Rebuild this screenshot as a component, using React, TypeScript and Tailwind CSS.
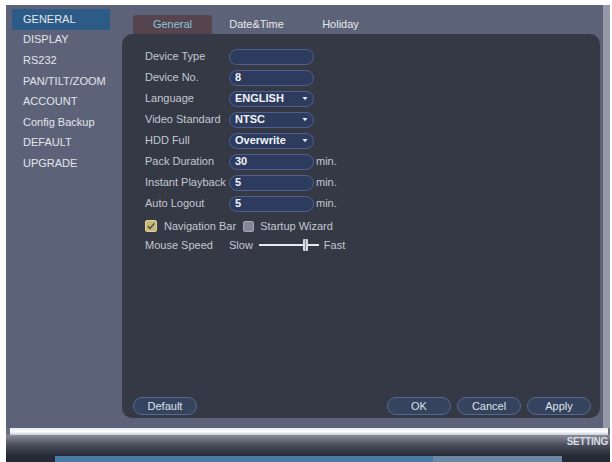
import React from "react";

const font = { fontFamily: '"Liberation Sans", Arial, sans-serif' };

const sideItems = [
  "GENERAL",
  "DISPLAY",
  "RS232",
  "PAN/TILT/ZOOM",
  "ACCOUNT",
  "Config Backup",
  "DEFAULT",
  "UPGRADE",
];

function Caret() {
  return (
    <svg width="6" height="5" viewBox="0 0 6 5" className="shrink-0">
      <path d="M0.5 1 L5.5 1 L3 4.2 Z" fill="#e8ebf2" />
    </svg>
  );
}

function Field({ value, select, unit }: { value?: string; select?: boolean; unit?: boolean }) {
  return (
    <div className="flex items-center">
      <div className="flex h-[16px] w-[85px] items-center justify-between rounded-full border border-[#50608a] bg-[#2d3b5e] pl-[5px] pr-[5px]">
        <span className="text-[11px] font-bold leading-none text-[#f2f4f8]">{value}</span>
        {select ? <Caret /> : null}
      </div>
      {unit ? <span className="ml-[2px] text-[11px] leading-none text-[#c3c7d1]">min.</span> : null}
    </div>
  );
}

function Row({ label, children, h = "h-[21px]" }: { label: string; children: React.ReactNode; h?: string }) {
  return (
    <div className={`flex items-center ${h}`}>
      <div className="w-[84px] text-[11px] leading-none text-[#c3c7d1]">{label}</div>
      {children}
    </div>
  );
}

function Btn({ label }: { label: string }) {
  return (
    <div className="flex h-[18px] w-[64px] items-center justify-center rounded-full border border-[#56688e] bg-[#35435f] text-[11px] leading-none text-[#dde1e8]">
      {label}
    </div>
  );
}

export default function App() {
  return (
    <div style={font} className="flex h-[462px] w-[612px] flex-col overflow-hidden bg-white pl-[6px] pt-[5px]">
      {/* main area */}
      <div className="flex h-[423px]">
        <div className="flex w-[597px] bg-[#5c6378]">
          {/* sidebar */}
          <div className="flex w-[116px] flex-col pl-[6px] pt-[4px]">
            {sideItems.map((s, i) => (
              <div
                key={s}
                className={`flex h-[20.6px] w-[98px] items-center pl-[11px] text-[11px] leading-none ${
                  i === 0 ? "bg-[#2b5b86] text-[#e4e8ef]" : "text-[#e2e5ec]"
                }`}
              >
                {s}
              </div>
            ))}
          </div>
          {/* right column */}
          <div className="flex w-[478px] flex-col pt-[10px]">
            <div className="flex h-[19px] gap-[5px] pl-[11px]">
              <div className="flex w-[79px] items-center justify-center rounded-t-[3px] bg-[#56444f] text-[11px] leading-none text-[#8cc4dc]">
                General
              </div>
              <div className="flex w-[79px] items-center justify-center text-[11px] leading-none text-[#e6e8ee]">
                Date&amp;Time
              </div>
              <div className="flex w-[79px] items-center justify-center text-[11px] leading-none text-[#e6e8ee]">
                Holiday
              </div>
            </div>
            <div className="flex h-[384px] flex-col rounded-[10px] bg-[#343945]">
              <div className="flex flex-col pl-[23px] pt-[12px]">
                <Row label="Device Type">
                  <Field />
                </Row>
                <Row label="Device No.">
                  <Field value="8" />
                </Row>
                <Row label="Language">
                  <Field value="ENGLISH" select />
                </Row>
                <Row label="Video Standard">
                  <Field value="NTSC" select />
                </Row>
                <Row label="HDD Full">
                  <Field value="Overwrite" select />
                </Row>
                <Row label="Pack Duration">
                  <Field value="30" unit />
                </Row>
                <Row label="Instant Playback">
                  <Field value="5" unit />
                </Row>
                <Row label="Auto Logout">
                  <Field value="5" unit />
                </Row>
                <div className="flex h-[22px] items-center pt-[2px]">
                  <div className="flex h-[12px] w-[12px] items-center justify-center rounded-[2px] border border-[#e0d39a] bg-[#c6b77a]">
                    <svg width="10" height="10" viewBox="0 0 10 10">
                      <path d="M1.8 5.2 L4 7.4 L8.4 2.4" stroke="#4a4a3a" strokeWidth="1.4" fill="none" />
                    </svg>
                  </div>
                  <span className="ml-[7px] text-[11px] leading-none text-[#c3c7d1]">Navigation Bar</span>
                  <div className="ml-[7px] h-[11px] w-[11px] rounded-[2px] border border-[#a8a6b8] bg-[#878699]" />
                  <span className="ml-[6px] text-[11px] leading-none text-[#c3c7d1]">Startup Wizard</span>
                </div>
                <Row label="Mouse Speed" h="h-[18px]">
                  <span className="text-[11px] leading-none text-[#c3c7d1]">Slow</span>
                  <div className="relative ml-[6px] h-[12px] w-[60px]">
                    <div className="absolute left-0 right-0 top-[5px] h-[2px] bg-[#e6e8ee]" />
                    <div className="absolute left-[44px] top-0 h-[12px] w-[5px] rounded-[1px] bg-[#d8dae2]">
                      <div className="mx-auto h-full w-[1px] bg-[#8a8e9a]" />
                    </div>
                  </div>
                  <span className="ml-[5px] text-[11px] leading-none text-[#c3c7d1]">Fast</span>
                </Row>
              </div>
              <div className="flex-1" />
              <div className="mb-[3px] flex items-center pl-[11px] pr-[9px]">
                <Btn label="Default" />
                <div className="flex-1" />
                <div className="flex gap-[6px]">
                  <Btn label="OK" />
                  <Btn label="Cancel" />
                  <Btn label="Apply" />
                </div>
              </div>
            </div>
          </div>
        </div>
        <div className="w-[7px] bg-[#969aa8]" />
      </div>
      {/* white strip */}
      <div className="flex h-[7px] w-[604px] bg-[#6a7084] pl-[4px] pr-[2px]">
        <div className="h-full w-full bg-gradient-to-b from-[#e8ebf2] via-[#fbfcfe] to-[#c8ccd6]" />
      </div>
      {/* dark gradient with SETTING */}
      <div className="flex h-[20px] w-[604px] justify-end bg-gradient-to-b from-[#8a8e9b] via-[#4a4e5c] to-[#2a2e3a] pr-[2px] pt-[1px]">
        <span className="text-[10px] font-bold leading-[12px] tracking-[-0.3px] text-[#d8dbe3]">SETTING</span>
      </div>
      {/* bottom bar */}
      <div className="flex h-[7px] w-[604px] bg-[#262a36] pt-[1px]">
        <div className="w-[49px]" />
        <div className="h-full w-[378px] bg-[#4a7aa3]" />
        <div className="h-full w-[129px] bg-[#6a88a4]" />
      </div>
    </div>
  );
}
